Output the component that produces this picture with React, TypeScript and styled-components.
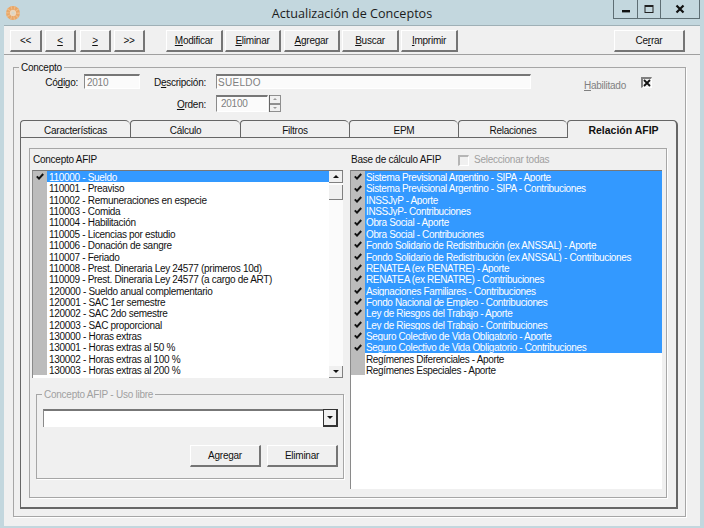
import styled, { createGlobalStyle } from 'styled-components'

const GlobalStyle = createGlobalStyle`
  html, body {
    margin: 0;
    padding: 0;
    background: #c3d7de;
  }
`

const Page = styled.div`
  width: 704px;
  height: 528px;
  overflow: hidden;
  display: flex;
  flex-direction: column;
  font-family: "Liberation Sans", Arial, sans-serif;
  font-size: 10px;
  line-height: 12px;
  letter-spacing: -0.25px;
  color: #111;
`

const TitleBar = styled.div`
  height: 25px;
  flex: none;
  display: grid;
  grid-template-columns: 1fr auto 1fr;
  padding: 0 4px;
`

const TitleIcon = styled.div`
  display: flex;
  align-items: center;
  padding-left: 1px;
  height: 25px;
`

const Title = styled.div`
  font-family: "Open Sans", "Noto Sans", sans-serif;
  font-size: 12.6px;
  letter-spacing: 0;
  line-height: 27px;
  color: #1c1c1c;
`

const WindowControls = styled.div`
  display: flex;
  justify-content: flex-end;
  align-items: flex-start;
`

const WindowControl = styled.div<{ $w: number }>`
  width: ${p => p.$w}px;
  height: 19px;
  box-sizing: border-box;
  border: 1px solid #5e6e74;
  border-top: 0;
  border-left-width: ${p => (p.$w === 25 ? 1 : 0)}px;
  display: flex;
  align-items: center;
  justify-content: center;
`

const Client = styled.div`
  margin: 0 4px;
  height: 501px;
  flex: none;
  background: #f0f0f0;
  border-top: 1px solid #9fb0b6;
  box-sizing: border-box;
`

const Toolbar = styled.div`
  height: 29px;
  box-sizing: border-box;
  border-bottom: 1px solid #a0a0a0;
  padding: 4px 15px 0 6px;
  display: flex;
`

const Button = styled.div<{ $w: number; $ml?: number }>`
  width: ${p => p.$w}px;
  height: 22px;
  margin-left: ${p => p.$ml ?? 0}px;
  box-sizing: border-box;
  flex: none;
  background: #f0f0f0;
  border-top: 1px solid #fff;
  border-left: 1px solid #fff;
  border-right: 2px solid #757575;
  border-bottom: 2px solid #757575;
  display: flex;
  align-items: center;
  justify-content: center;
`

const ToolbarSpacer = styled.div`
  flex: 1;
`

const GroupBox = styled.fieldset`
  margin: 6px 14px 0 9px;
  padding: 1px 0 0 0;
  height: 456px;
  box-sizing: border-box;
  border: 1px solid #a6a6a6;
  box-shadow: 1px 1px 0 #fff;
  min-width: 0;
`

const GroupLegend = styled.legend<{ $disabled?: boolean; $ml: number }>`
  margin-left: ${p => p.$ml}px;
  padding: 1px 2px 0;
  height: 12px;
  box-sizing: border-box;
  line-height: 12px;
  color: ${p => (p.$disabled ? '#a0a0a0' : '#111')};
`

const FormRow = styled.div<{ $h: number }>`
  display: flex;
  height: ${p => p.$h}px;
  margin-bottom: 6px;
  align-items: center;
`

const FieldLabel = styled.div<{ $w: number }>`
  width: ${p => p.$w}px;
  flex: none;
  padding-top: 2px;
  box-sizing: border-box;
  text-align: right;
`

const Input = styled.div<{ $w: number; $ml: number; $h: number; $pl?: number }>`
  width: ${p => p.$w}px;
  height: ${p => p.$h}px;
  margin-left: ${p => p.$ml}px;
  box-sizing: border-box;
  flex: none;
  background: #fbfbfb;
  border-top: 2px solid #777;
  border-left: 1px solid #8a8a8a;
  border-right: 1px solid #fff;
  border-bottom: 1px solid #fff;
  color: #808080;
  padding: 1px 0 0 ${p => p.$pl ?? 1}px;
  line-height: 12px;
`

const DescriptionInput = styled(Input)`
  letter-spacing: 0.3px;
`

const HabilitadoLabel = styled.div`
  margin-left: 53px;
  margin-top: 8px;
  width: 44px;
  flex: none;
  color: #808080;
`

const CheckBox = styled.div<{ $disabled?: boolean }>`
  width: 11px;
  height: 11px;
  box-sizing: border-box;
  flex: none;
  border-top: 2px solid ${p => (p.$disabled ? '#b5b5b5' : '#808080')};
  border-left: 2px solid ${p => (p.$disabled ? '#b5b5b5' : '#808080')};
  border-right: 1px solid #fff;
  border-bottom: 1px solid #fff;
  display: flex;
  align-items: center;
  justify-content: center;
`

const HabilitadoBox = styled(CheckBox)`
  margin-left: 13px;
  margin-top: 1px;
`

const SelectAllBox = styled(CheckBox)`
  margin-left: 17px;
`

const Spinner = styled.div`
  width: 12px;
  height: 17px;
  margin-left: 1px;
  flex: none;
  display: flex;
  flex-direction: column;
  border-left: 1px solid #666;
  box-sizing: border-box;
`

const SpinnerPart = styled.div`
  flex: 1;
  box-sizing: border-box;
  border: 1px solid #8f8f8f;
  border-left: 0;
  display: flex;
  align-items: center;
  justify-content: center;
`

const Arrow = styled.div<{ $dir: 'up' | 'down'; $color?: string; $size?: number }>`
  width: 0;
  height: 0;
  border-left: ${p => p.$size ?? 3}px solid transparent;
  border-right: ${p => p.$size ?? 3}px solid transparent;
  ${p =>
    p.$dir === 'up'
      ? `border-bottom: ${p.$size ?? 3}px solid ${p.$color ?? '#111'};`
      : `border-top: ${p.$size ?? 3}px solid ${p.$color ?? '#111'};`}
`

const TabStrip = styled.div`
  display: flex;
  margin: 8px 0 0 6px;
  height: 18px;
`

const Tab = styled.div<{ $w: number; $active?: boolean }>`
  width: ${p => p.$w}px;
  height: 18px;
  box-sizing: border-box;
  flex: none;
  text-align: center;
  line-height: 19px;
  font-weight: ${p => (p.$active ? 'bold' : 'normal')};
  font-size: ${p => (p.$active ? '10.5px' : '10px')};
  letter-spacing: ${p => (p.$active ? '0' : '-0.25px')};
  padding-left: ${p => (p.$active ? '3px' : '0')};
  border-top: 1px solid #666;
  border-left: 1px solid #666;
  border-right: ${p => (p.$active ? '2px solid #666' : '0')};
  border-bottom: ${p => (p.$active ? '0' : '1px solid #666')};
  border-radius: 4px 5px 0 0;
  background: #f0f0f0;
`

const TabPanel = styled.div`
  margin-left: 6px;
  width: 658px;
  height: 371px;
  box-sizing: border-box;
  border-left: 1px solid #666;
  border-right: 2px solid #666;
  border-bottom: 2px solid #666;
  padding: 10px 9px 9px 8px;
`

const InnerBox = styled.div`
  height: 100%;
  box-sizing: border-box;
  border: 1px solid #a6a6a6;
  box-shadow: 1px 1px 0 #fff;
  padding: 5px 4px 0 2px;
  display: grid;
  grid-template-columns: 311px 312px;
  column-gap: 7px;
`

const Column = styled.div`
  display: flex;
  flex-direction: column;
  min-width: 0;
`

const ColumnHead = styled.div`
  height: 12px;
  margin-bottom: 4px;
  flex: none;
  display: flex;
  align-items: center;
  line-height: 14px;
`

const ColumnHeadLeft = styled(ColumnHead)`
  padding-left: 1px;
`

const BaseHead = styled.span`
  padding-left: 1px;
`

const SelectAll = styled.div`
  margin-left: 5px;
  color: #a0a0a0;
`

const ListBox = styled.div<{ $h: number }>`
  height: ${p => p.$h}px;
  box-sizing: border-box;
  flex: none;
  background: #fff;
  border-top: 1px solid #777;
  border-left: 1px solid #8a8a8a;
  display: flex;
`

const ListRows = styled.div`
  flex: 1;
  min-width: 0;
`

const Row = styled.div`
  height: 11.36px;
  display: flex;
  line-height: 13.36px;
  letter-spacing: -0.31px;
  white-space: nowrap;
`

const BaseRow = styled(Row)`
  letter-spacing: -0.36px;
`

const Gutter = styled.div`
  width: 14px;
  flex: none;
  background: #bcbcbc;
  display: flex;
  align-items: center;
  justify-content: center;
`

const RowLabel = styled.div<{ $selected?: boolean; $pl: number }>`
  flex: 1;
  padding-left: ${p => p.$pl}px;
  background: ${p => (p.$selected ? '#3399ff' : 'transparent')};
  color: ${p => (p.$selected ? '#fff' : '#111')};
`

const ScrollBar = styled.div`
  width: 14px;
  flex: none;
  display: flex;
  flex-direction: column;
  background: #fbfbfb;
`

const ScrollButton = styled.div`
  height: 12px;
  flex: none;
  box-sizing: border-box;
  background: #f0f0f0;
  border-right: 1px solid #808080;
  border-bottom: 1px solid #808080;
  display: flex;
  align-items: center;
  justify-content: center;
`

const ScrollThumb = styled.div`
  height: 15px;
  margin-top: 2px;
  box-sizing: border-box;
  background: #f0f0f0;
  border-right: 1px solid #808080;
  border-bottom: 1px solid #808080;
`

const ScrollTrack = styled.div`
  flex: 1;
`

const FreeGroup = styled.fieldset`
  margin: 10px 0 0 4px;
  padding: 9px 5px 0 6px;
  width: 308px;
  height: 91px;
  box-sizing: border-box;
  border: 1px solid #a6a6a6;
  box-shadow: 1px 1px 0 #fff;
  min-width: 0;
`

const Combo = styled.div`
  height: 18px;
  display: flex;
  background: #fff;
  border-top: 2px solid #777;
  border-left: 1px solid #8a8a8a;
  box-sizing: border-box;
  justify-content: flex-end;
`

const ComboButton = styled.div`
  width: 15px;
  height: 18px;
  margin-top: -2px;
  box-sizing: border-box;
  background: #f0f0f0;
  border: 2px solid #333;
  border-top-width: 1px;
  border-left-width: 1px;
  display: flex;
  align-items: center;
  justify-content: center;
`

const FreeButtons = styled.div`
  display: flex;
  justify-content: flex-end;
  gap: 6px;
  margin-top: 18px;
`

const Tick = () => (
  <svg width="8" height="7" viewBox="0 0 8 7">
    <path d="M0.8 3.4 L3 5.6 L7.2 1" fill="none" stroke="#111" strokeWidth="2" />
  </svg>
)

const Logo = () => (
  <svg width="16" height="16" viewBox="0 0 16 16">
    <circle cx="8" cy="8" r="5" fill="none" stroke="#e9a767" strokeWidth="4" />
    <circle cx="8" cy="8" r="5" fill="none" stroke="#f0bd8a" strokeWidth="4" strokeDasharray="1 2" />
    <circle cx="8" cy="8" r="3" fill="#f2d6b8" />
    <circle cx="8" cy="8" r="1.8" fill="#d8d6c8" />
  </svg>
)

const left = [
  '110000 - Sueldo',
  '110001 - Preaviso',
  '110002 - Remuneraciones en especie',
  '110003 - Comida',
  '110004 - Habilitación',
  '110005 - Licencias por estudio',
  '110006 - Donación de sangre',
  '110007 - Feriado',
  '110008 - Prest. Dineraria Ley 24577 (primeros 10d)',
  '110009 - Prest. Dineraria Ley 24577 (a cargo de ART)',
  '120000 - Sueldo anual complementario',
  '120001 - SAC 1er semestre',
  '120002 - SAC 2do semestre',
  '120003 - SAC proporcional',
  '130000 - Horas extras',
  '130001 - Horas extras al 50 %',
  '130002 - Horas extras al 100 %',
  '130003 - Horas extras al 200 %',
]

const right = [
  'Sistema Previsional Argentino - SIPA - Aporte',
  'Sistema Previsional Argentino - SIPA - Contribuciones',
  'INSSJyP - Aporte',
  'INSSJyP- Contribuciones',
  'Obra Social - Aporte',
  'Obra Social - Contribuciones',
  'Fondo Solidario de Redistribución (ex ANSSAL) - Aporte',
  'Fondo Solidario de Redistribución (ex ANSSAL) - Contribuciones',
  'RENATEA (ex RENATRE) - Aporte',
  'RENATEA (ex RENATRE) - Contribuciones',
  'Asignaciones Familiares - Contribuciones',
  'Fondo Nacional de Empleo - Contribuciones',
  'Ley de Riesgos del Trabajo - Aporte',
  'Ley de Riesgos del Trabajo - Contribuciones',
  'Seguro Colectivo de Vida Obligatorio - Aporte',
  'Seguro Colectivo de Vida Obligatorio - Contribuciones',
  'Regímenes Diferenciales - Aporte',
  'Regímenes Especiales - Aporte',
]

function App() {
  return (
    <Page>
      <GlobalStyle />
      <TitleBar>
        <TitleIcon>
          <Logo />
        </TitleIcon>
        <Title>Actualización de Conceptos</Title>
        <WindowControls>
          <WindowControl $w={25}>
            <svg width="10" height="10" viewBox="0 0 10 10">
              <rect x="1" y="6" width="8" height="2.4" fill="#111" />
            </svg>
          </WindowControl>
          <WindowControl $w={23}>
            <svg width="10" height="10" viewBox="0 0 10 10">
              <rect x="1" y="1.5" width="8" height="7" fill="none" stroke="#222" strokeWidth="1" />
              <rect x="1" y="1" width="8" height="2" fill="#222" />
            </svg>
          </WindowControl>
          <WindowControl $w={39}>
            <svg width="10" height="10" viewBox="0 0 10 10">
              <path d="M1.5 1.5 L8.5 8.5 M8.5 1.5 L1.5 8.5" stroke="#111" strokeWidth="2.2" />
            </svg>
          </WindowControl>
        </WindowControls>
      </TitleBar>

      <Client>
        <Toolbar>
          <Button $w={32}>&lt;&lt;</Button>
          <Button $w={31} $ml={3}><u>&lt;</u></Button>
          <Button $w={31} $ml={4}><u>&gt;</u></Button>
          <Button $w={31} $ml={3}>&gt;&gt;</Button>
          <Button $w={57} $ml={21}><span><u>M</u>odificar</span></Button>
          <Button $w={56} $ml={2}><span><u>E</u>liminar</span></Button>
          <Button $w={56} $ml={3}><span><u>A</u>gregar</span></Button>
          <Button $w={57} $ml={2}><span><u>B</u>uscar</span></Button>
          <Button $w={57} $ml={2}><span><u>I</u>mprimir</span></Button>
          <ToolbarSpacer />
          <Button $w={71}><span>Ce<u>r</u>rar</span></Button>
        </Toolbar>

        <GroupBox>
          <GroupLegend $ml={5}>Concepto</GroupLegend>
          <FormRow $h={15}>
            <FieldLabel $w={64}>Có<u>d</u>igo:</FieldLabel>
            <Input $w={56} $ml={6} $h={15} $pl={2}>2010</Input>
            <FieldLabel $w={66}>D<u>e</u>scripción:</FieldLabel>
            <DescriptionInput $w={315} $ml={10} $h={15}>SUELDO</DescriptionInput>
            <HabilitadoLabel><u>H</u>abilitado</HabilitadoLabel>
            <HabilitadoBox>
              <svg width="8" height="8" viewBox="0 0 8 8">
                <path d="M1 1 L7 7 M7 1 L1 7" stroke="#111" strokeWidth="1.8" />
              </svg>
            </HabilitadoBox>
          </FormRow>
          <FormRow $h={17}>
            <FieldLabel $w={192}><u>O</u>rden:</FieldLabel>
            <Input $w={52} $ml={10} $h={17} $pl={4}>20100</Input>
            <Spinner>
              <SpinnerPart><Arrow $dir="up" $color="#9a9a9a" $size={2} /></SpinnerPart>
              <SpinnerPart><Arrow $dir="down" $color="#9a9a9a" $size={2} /></SpinnerPart>
            </Spinner>
          </FormRow>

          <TabStrip>
            <Tab $w={110}>Características</Tab>
            <Tab $w={110}>Cálculo</Tab>
            <Tab $w={109}>Filtros</Tab>
            <Tab $w={109}>EPM</Tab>
            <Tab $w={109}>Relaciones</Tab>
            <Tab $w={111} $active>Relación AFIP</Tab>
          </TabStrip>
          <TabPanel>
            <InnerBox>
              <Column>
                <ColumnHeadLeft>Concepto AFIP</ColumnHeadLeft>
                <ListBox $h={208}>
                  <ListRows>
                    {left.map((text, i) => (
                      <Row key={text}>
                        <Gutter>{i === 0 && <Tick />}</Gutter>
                        <RowLabel $selected={i === 0} $pl={2}>{text}</RowLabel>
                      </Row>
                    ))}
                  </ListRows>
                  <ScrollBar>
                    <ScrollButton><Arrow $dir="up" /></ScrollButton>
                    <ScrollThumb />
                    <ScrollTrack />
                    <ScrollButton><Arrow $dir="down" /></ScrollButton>
                  </ScrollBar>
                </ListBox>
                <FreeGroup>
                  <GroupLegend $disabled $ml={-1}>Concepto AFIP - Uso libre</GroupLegend>
                  <Combo>
                    <ComboButton><Arrow $dir="down" /></ComboButton>
                  </Combo>
                  <FreeButtons>
                    <Button $w={71}>Agregar</Button>
                    <Button $w={71}>Eliminar</Button>
                  </FreeButtons>
                </FreeGroup>
              </Column>
              <Column>
                <ColumnHead>
                  <BaseHead>Base de cálculo AFIP</BaseHead>
                  <SelectAllBox $disabled />
                  <SelectAll>Seleccionar todas</SelectAll>
                </ColumnHead>
                <ListBox $h={319}>
                  <ListRows>
                    {right.map((text, i) => (
                      <BaseRow key={text}>
                        <Gutter>{i < 16 && <Tick />}</Gutter>
                        <RowLabel $selected={i < 16} $pl={1}>{text}</RowLabel>
                      </BaseRow>
                    ))}
                  </ListRows>
                </ListBox>
              </Column>
            </InnerBox>
          </TabPanel>
        </GroupBox>
      </Client>
    </Page>
  )
}

export default App
